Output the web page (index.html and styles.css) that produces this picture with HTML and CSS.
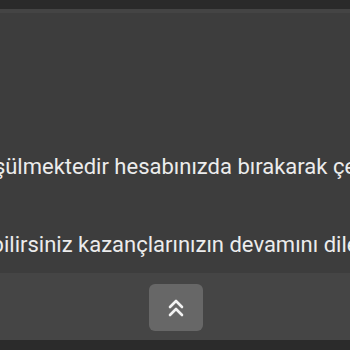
FILE: index.html
```html
<!DOCTYPE html>
<html>
<head>
<meta charset="utf-8">
<link rel="stylesheet" href="styles.css">
</head>
<body>
<div class="page">
  <div class="topbar"></div>
  <div class="edge"></div>
  <main class="content">
    <p class="line line1">şülmektedir hesabınızda bırakarak çe</p>
    <p class="line line2">bilirsiniz kazançlarınızın devamını dile</p>
  </main>
  <footer class="footer">
    <button class="up" aria-label="Yukarı">
      <svg width="18" height="20" viewBox="0 0 18 20" fill="none" stroke="#f2f2f2" stroke-width="2.6" stroke-linecap="round" stroke-linejoin="round">
        <path d="M3 9 L9 3 L15 9"/>
        <path d="M3 17 L9 11 L15 17"/>
      </svg>
    </button>
  </footer>
  <div class="bottombar"></div>
</div>
</body>
</html>
```

FILE: styles.css
```css
html, body {
  margin: 0;
  padding: 0;
  background: #3d3d3d;
}
.page {
  width: 350px;
  height: 350px;
  display: flex;
  flex-direction: column;
  overflow: hidden;
  font-family: Roboto, "Noto Sans", sans-serif;
}
.topbar {
  height: 9px;
  background: #2a2a2a;
  flex: none;
}
.edge {
  height: 4px;
  background: #444444;
  flex: none;
}
.content {
  flex: 1;
  background: #3d3d3d;
  display: flex;
  flex-direction: column;
  align-items: center;
  overflow: hidden;
}
.line {
  margin: 0;
  white-space: nowrap;
  color: #ececec;
  font-size: 22px;
  line-height: 25px;
}
.line1 {
  margin-top: 141px;
}
.line2 {
  margin-top: 53px;
}
.footer {
  height: 67px;
  flex: none;
  background: #454545;
  display: flex;
  justify-content: center;
  align-items: flex-start;
  padding-top: 11px;
  box-sizing: border-box;
}
.up {
  width: 54px;
  height: 47px;
  border: none;
  border-radius: 6px;
  background: #676767;
  display: flex;
  align-items: center;
  justify-content: center;
  padding: 0;
  margin-left: 2px;
}
.bottombar {
  height: 10px;
  flex: none;
  background: #2b2b2b;
}
```
